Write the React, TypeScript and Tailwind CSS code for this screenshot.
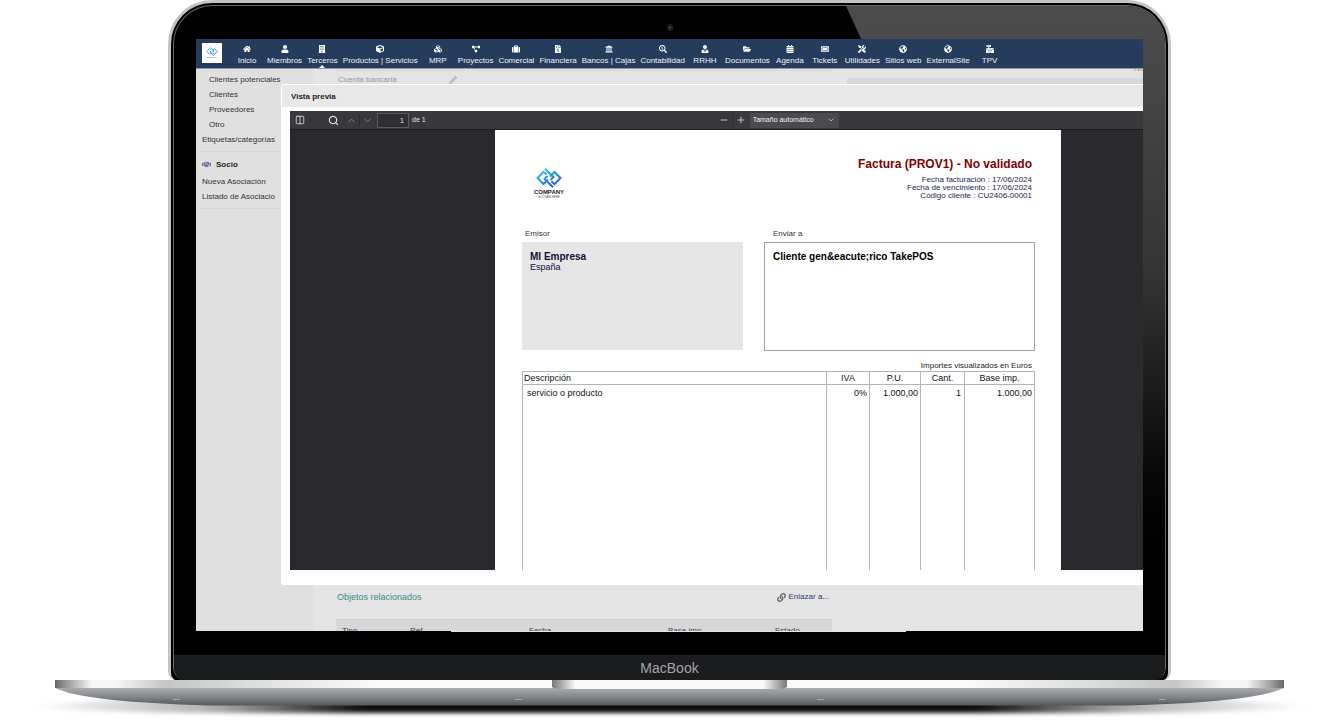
import React from "react";
import {
    FaHome, FaUser, FaBuilding, FaCube, FaCubes, FaProjectDiagram, FaSuitcase, FaFileInvoiceDollar,
    FaUniversity, FaSearchDollar, FaUserTie, FaFolderOpen, FaCalendarAlt, FaTicketAlt, FaTools,
    FaGlobeAmericas, FaCashRegister, FaPencilAlt, FaLink, FaHandshake,
} from "react-icons/fa";
import { ChevronDown, ChevronUp, Columns2, Minus, Plus, Search } from "lucide-react";

const menu = [
    { label: "Inicio", icon: FaHome },
    { label: "Miembros", icon: FaUser },
    { label: "Terceros", icon: FaBuilding, active: true },
    { label: "Productos | Servicios", icon: FaCube },
    { label: "MRP", icon: FaCubes },
    { label: "Proyectos", icon: FaProjectDiagram },
    { label: "Comercial", icon: FaSuitcase },
    { label: "Financiera", icon: FaFileInvoiceDollar },
    { label: "Bancos | Cajas", icon: FaUniversity },
    { label: "Contabilidad", icon: FaSearchDollar },
    { label: "RRHH", icon: FaUserTie },
    { label: "Documentos", icon: FaFolderOpen },
    { label: "Agenda", icon: FaCalendarAlt },
    { label: "Tickets", icon: FaTicketAlt },
    { label: "Utilidades", icon: FaTools },
    { label: "Sitios web", icon: FaGlobeAmericas },
    { label: "ExternalSite", icon: FaGlobeAmericas },
    { label: "TPV", icon: FaCashRegister },
];

function LogoMark({ className }: { className: string }) {
    return (
        <svg viewBox="0 0 26 20" className={className} fill="none" strokeWidth="2">
            <defs>
                <linearGradient id="mark" gradientUnits="userSpaceOnUse" x1="6" y1="0" x2="18" y2="20">
                    <stop offset="0" stopColor="#27d3f5" />
                    <stop offset="1" stopColor="#2450c8" />
                </linearGradient>
            </defs>
            <g stroke="url(#mark)">
                <path d="M10.500 6.500 L7.500 3.800 L1.500 10 L7.500 16 L12 11.500" />
                <path d="M9 0.800 L17.500 9 L14.500 12" />
                <path d="M15.500 13.500 L18.500 16.200 L24.500 10 L18.500 4 L14 8.500" />
                <path d="M17 19.200 L8.500 11 L11.500 8" />
            </g>
        </svg>
    );
}

function CompanyLogo() {
    return (
        <div className="flex w-8 flex-col items-center">
            <LogoMark className="h-5 w-[26px]" />
            <span className="text-[6px] font-bold leading-[8px] text-[#222]">COMPANY</span>
            <span className="text-[3px] leading-[3px] text-[#555]">SLOGAN HERE</span>
        </div>
    );
}

function TopMenu() {
    return (
        <nav className="flex h-[30px] items-start gap-[10px] border-b border-[#8f99a8] bg-[#263c5c] pl-[6px] pt-1">
            <a href="#" className="flex size-5 shrink-0 flex-col items-center justify-center bg-white">
                <LogoMark className="h-[9px] w-3" />
                <span className="text-[2px] leading-[3px] text-[#333]">COMPANY</span>
            </a>
            <div className="flex gap-[5px]">
                {menu.map(({ label, icon: Icon, active }) => (
                    <a key={label} href="#" className="relative flex h-[25px] min-w-[30px] shrink-0 flex-col items-center gap-[3px] whitespace-nowrap pt-[2px] text-white">
                        <Icon className="size-2" />
                        <span className="text-[8px] leading-[10px] text-[#eef1f5]">{label}</span>
                        {active && <span className="absolute bottom-0 border-x-[3px] border-b-[3px] border-x-transparent border-b-white"></span>}
                    </a>
                ))}
            </div>
        </nav>
    );
}

function Sidebar() {
    return (
        <aside className="w-[118px] shrink-0 whitespace-nowrap bg-[#e0e0e0] pt-[3px] text-[8px] leading-[15px] text-[#333]">
            <ul>
                {["Clientes potenciales", "Clientes", "Proveedores", "Otro"].map((item) => (
                    <li key={item} className="pl-[13px]"><a href="#">{item}</a></li>
                ))}
                <li className="pl-[6px]"><a href="#">Etiquetas/categorías</a></li>
            </ul>
            <hr className="mx-1 mt-1 border-[#d6d6d6]" />
            <h3 className="mt-[5px] flex items-center gap-[5px] pl-[6px] font-bold text-[#222]">
                <FaHandshake className="size-[9px] text-[#6c6aa8]" />
                Socio
            </h3>
            <ul className="mt-[2px] pl-[6px]">
                <li><a href="#">Nueva Asociación</a></li>
                <li><a href="#">Listado de Asociacio</a></li>
            </ul>
            <hr className="mx-1 mt-1 border-[#d6d6d6]" />
        </aside>
    );
}

function ThirdPartyCard() {
    return (
        <main className="flex min-w-0 flex-1 flex-col justify-between bg-[#e4e4e4] pl-[22px]">
            <div className="flex h-[15px] overflow-hidden text-[8px] text-[#999]">
                <div className="mt-[1px] flex w-[496px] shrink-0 items-center gap-[52px] border-t border-[#dadada] pl-[2px] pt-[4px]">
                    <span>Cuenta bancaria</span>
                    <FaPencilAlt className="size-2 text-[#b5b5b5]" />
                </div>
                <div className="ml-[15px] flex flex-1 flex-col">
                    <span className="-mt-1 h-[13px] pl-[287px] leading-[8px]">Ne</span>
                    <div className="h-[6px] bg-[#d7d8da]"></div>
                </div>
            </div>
            <section className="w-[496px]">
                <div className="flex items-center justify-between pl-[1px] pr-[3px]">
                    <h2 className="text-[9px] leading-[12px] text-[#3f8d8d]">Objetos relacionados</h2>
                    <a href="#" className="flex items-center gap-[3px] text-[8px] leading-[12px] text-[#333a7c]">
                        <FaLink className="size-[9px] text-[#666]" />
                        Enlazar a...
                    </a>
                </div>
                <div className="mt-4 h-3 overflow-hidden border-t border-[#cbccce] bg-[#d6d7da]">
                    <table className="w-full table-fixed text-left text-[8px] leading-[10px] text-[#444]">
                        <thead>
                            <tr>
                                <th className="w-[68px] pl-[6px] pt-[6px] font-normal">Tipo</th>
                                <th className="w-[119px] pl-[6px] pt-[6px] font-normal">Ref.</th>
                                <th className="w-[139px] pl-[6px] pt-[6px] font-normal">Fecha</th>
                                <th className="w-[107px] pl-[6px] pt-[6px] font-normal">Base imp.</th>
                                <th className="pl-[6px] pt-[6px] font-normal">Estado</th>
                            </tr>
                        </thead>
                    </table>
                </div>
            </section>
        </main>
    );
}

function ViewerToolbar() {
    return (
        <div className="flex h-[19px] items-center border-b border-[#1c1c1f] bg-[#38383d] pl-[5px] text-[7px] text-[#e0e0e0]">
            <button aria-label="Barra lateral"><Columns2 className="size-[10px]" /></button>
            <button aria-label="Buscar" className="ml-[23px]"><Search className="size-[11px]" strokeWidth={2.5} /></button>
            <button aria-label="Anterior" className="ml-[7px] text-[#8a8a8e]"><ChevronUp className="size-[11px]" /></button>
            <span className="mx-[2px] h-3 w-px bg-[#2c2c30]"></span>
            <button aria-label="Siguiente" className="text-[#8a8a8e]"><ChevronDown className="size-[11px]" /></button>
            <label className="ml-1 flex items-center gap-[3px]">
                <input defaultValue="1" aria-label="Página" className="h-[15px] w-8 border border-[#5a5a5e] bg-[#2f2f33] pr-1 text-right" />
                de 1
            </label>
            <button aria-label="Alejar" className="ml-[293px]"><Minus className="size-[10px]" /></button>
            <span className="mx-[3px] h-3 w-px bg-[#2c2c30]"></span>
            <button aria-label="Acercar"><Plus className="size-[10px]" /></button>
            <div className="relative ml-1 flex items-center">
                <select aria-label="Zoom" className="h-[15px] w-[89px] appearance-none bg-[#4a4a4f] pl-[3px] text-[7px] text-[#f0f0f0]">
                    <option>Tamaño automático</option>
                </select>
                <ChevronDown className="pointer-events-none absolute right-1 size-2" />
            </div>
        </div>
    );
}

function Invoice() {
    return (
        <article className="ml-[205px] mr-[82px] h-[440px] overflow-hidden bg-white pl-[27px] pr-[26px] text-[8px]">
            <header className="flex h-[98px] justify-between">
                <div className="pl-[11px] pt-[38px]"><CompanyLogo /></div>
                <div className="pr-[3px] pt-[26px] text-right leading-[8px] text-[#1d1d4f]">
                    <h1 className="mb-[4px] text-[12px] font-bold leading-[16px] text-[#800000]">Factura (PROV1) - No validado</h1>
                    <p>Fecha facturación : 17/06/2024</p>
                    <p>Fecha de vencimiento : 17/06/2024</p>
                    <p>Código cliente : CU2406-00001</p>
                </div>
            </header>
            <div className="flex justify-between leading-[11px]">
                <section className="w-[221px]">
                    <h2 className="pb-[3px] pl-[3px] text-[#333]">Emisor</h2>
                    <div className="h-[108px] bg-[#e6e6e6] pl-2 pt-[9px] text-[#0f0f3c]">
                        <p className="text-[10px] font-bold">MI Empresa</p>
                        <p className="text-[9px]">España</p>
                    </div>
                </section>
                <section className="w-[271px]">
                    <h2 className="pb-[3px] pl-[9px] text-[#333]">Enviar a</h2>
                    <div className="h-[109px] border border-[#a0a0a0] pl-2 pt-[8px] text-black">
                        <p className="text-[10px] font-bold">{"Cliente gen&eacute;rico TakePOS"}</p>
                    </div>
                </section>
            </div>
            <p className="pr-[3px] pt-[9px] text-right leading-[11px] text-[#222]">Importes visualizados en Euros</p>
            <table className="h-[220px] w-full table-fixed border-collapse border border-[#b4b4b4] text-[9px] leading-[12px] text-[#111]">
                <thead>
                    <tr className="h-[13px] border-b border-[#b4b4b4]">
                        <th className="pl-px text-left font-normal">Descripción</th>
                        <th className="w-[43px] border-l border-[#b4b4b4] font-normal">IVA</th>
                        <th className="w-[51px] border-l border-[#b4b4b4] font-normal">P.U.</th>
                        <th className="w-[44px] border-l border-[#b4b4b4] font-normal">Cant.</th>
                        <th className="w-[70px] border-l border-[#b4b4b4] font-normal">Base imp.</th>
                    </tr>
                </thead>
                <tbody>
                    <tr className="align-top">
                        <td className="pl-1 pt-[2px]">servicio o producto</td>
                        <td className="border-l border-[#b4b4b4] pr-[2px] pt-[2px] text-right">0%</td>
                        <td className="border-l border-[#b4b4b4] pr-[2px] pt-[2px] text-right">1.000,00</td>
                        <td className="border-l border-[#b4b4b4] pr-[3px] pt-[2px] text-right">1</td>
                        <td className="border-l border-[#b4b4b4] pr-[2px] pt-[2px] text-right">1.000,00</td>
                    </tr>
                </tbody>
            </table>
        </article>
    );
}

function PreviewDialog() {
    return (
        <div role="dialog" aria-label="Vista previa" className="z-10 mb-[46px] ml-[85px] mt-[15px] rounded-l-[3px] bg-white pb-[15px] pl-px pt-px [grid-area:1/1]">
            <h2 className="h-[22px] bg-[#e8e8e8] pl-[9px] text-[8px] font-bold leading-[23px] text-[#222]">Vista previa</h2>
            <div className="ml-2 mt-1 bg-[#2a2a2e]">
                <ViewerToolbar />
                <Invoice />
            </div>
        </div>
    );
}

// front edge, body and shadow of the laptop
function LaptopBase() {
    return (
        <svg viewBox="0 0 1340 40" preserveAspectRatio="none" className="relative -mt-px block h-10 w-full">
            <defs>
                <linearGradient id="edge">
                    <stop offset="0" stopColor="#66686a" />
                    <stop offset="0.012" stopColor="#a5a5a5" />
                    <stop offset="0.03" stopColor="#f6f6f6" />
                    <stop offset="0.05" stopColor="#f6f6f6" />
                    <stop offset="0.09" stopColor="#c4c5c6" />
                    <stop offset="0.16" stopColor="#dcdddd" />
                    <stop offset="0.26" stopColor="#fafafa" />
                    <stop offset="0.74" stopColor="#fafafa" />
                    <stop offset="0.84" stopColor="#dcdddd" />
                    <stop offset="0.91" stopColor="#c4c5c6" />
                    <stop offset="0.95" stopColor="#f6f6f6" />
                    <stop offset="0.97" stopColor="#f6f6f6" />
                    <stop offset="0.988" stopColor="#a5a5a5" />
                    <stop offset="1" stopColor="#66686a" />
                </linearGradient>
                <linearGradient id="notch">
                    <stop offset="0" stopColor="#77787a" />
                    <stop offset="0.1" stopColor="#f8f8f8" />
                    <stop offset="0.9" stopColor="#f8f8f8" />
                    <stop offset="1" stopColor="#77787a" />
                </linearGradient>
                <linearGradient id="body" x2="0" y2="1">
                    <stop offset="0" stopColor="#a9acaf" />
                    <stop offset="0.5" stopColor="#85878a" />
                    <stop offset="1" stopColor="#55575a" />
                </linearGradient>
                <linearGradient id="shade">
                    <stop offset="0" stopColor="#000" stopOpacity="0" />
                    <stop offset="0.14" stopColor="#000" stopOpacity="0.3" />
                    <stop offset="0.26" stopColor="#000" stopOpacity="0.95" />
                    <stop offset="0.74" stopColor="#000" stopOpacity="0.95" />
                    <stop offset="0.86" stopColor="#000" stopOpacity="0.3" />
                    <stop offset="1" stopColor="#000" stopOpacity="0" />
                </linearGradient>
                <filter id="soft" x="-5%" y="-50%" width="110%" height="200%">
                    <feGaussianBlur stdDeviation="10 2" />
                </filter>
            </defs>
            <path d="M30 27 Q100 19 180 18 H1160 Q1240 19 1310 27 Q1240 33 1100 33 H240 Q100 33 30 27 Z" fill="url(#shade)" filter="url(#soft)" />
            <path d="M55 8 H1284 Q1255 22 1130 25.500 H210 Q84 22 55 8 Z" fill="url(#body)" />
            <rect x="55" y="0" width="1229" height="8" fill="url(#edge)" />
            <path d="M552 0 H787 V7 Q784 9 776 9 H563 Q555 9 552 7 Z" fill="url(#notch)" />
            {[173, 515, 817, 1159].map((x) => (
                <rect key={x} x={x} y="19" width="7" height="1" fill="#a6a8aa" />
            ))}
        </svg>
    );
}

export default function App() {
    return (
        <div className="overflow-hidden bg-white font-['Liberation_Sans',Arial,sans-serif]">
            <div className="ml-[168px] mr-[169px] rounded-b-[10px] rounded-t-[44px] bg-[#c3c4c6] px-[3px] pt-[3px]">
                <div className="rounded-b-[8px] rounded-t-[41px] bg-black px-[2px] pt-[2px]">
                    <div className="relative overflow-hidden rounded-b-[14px] rounded-t-[39px] border border-b-0 border-[#66686a] bg-black">
                        <div className="absolute inset-0 bg-linear-to-b from-[#4c4c4c] via-[#333534] via-40% to-black to-90% [clip-path:polygon(672px_0,100%_0,100%_100%,980px_100%)]"></div>
                        <div className="absolute left-1/2 top-[18px] size-[7px] -translate-x-1/2 rounded-full border border-[#222] bg-[#111]">
                            <div className="m-px size-[3px] rounded-full bg-[#444]"></div>
                        </div>
                        <div className="relative mx-[22px] mt-[33px] overflow-hidden">
                            <TopMenu />
                            <div className="grid">
                                <div className="flex min-w-0 [grid-area:1/1]">
                                    <Sidebar />
                                    <ThirdPartyCard />
                                </div>
                                <PreviewDialog />
                            </div>
                            <div className="ml-[255px] h-px w-[455px] bg-[#e4e4e4]"></div>
                        </div>
                        <div className="relative mt-[23px] h-[26px] border-b border-black bg-[#1b1c1e] text-center text-[14px] leading-[26px] text-[#a3a4a6]">MacBook</div>
                    </div>
                </div>
            </div>
            <LaptopBase />
        </div>
    );
}
